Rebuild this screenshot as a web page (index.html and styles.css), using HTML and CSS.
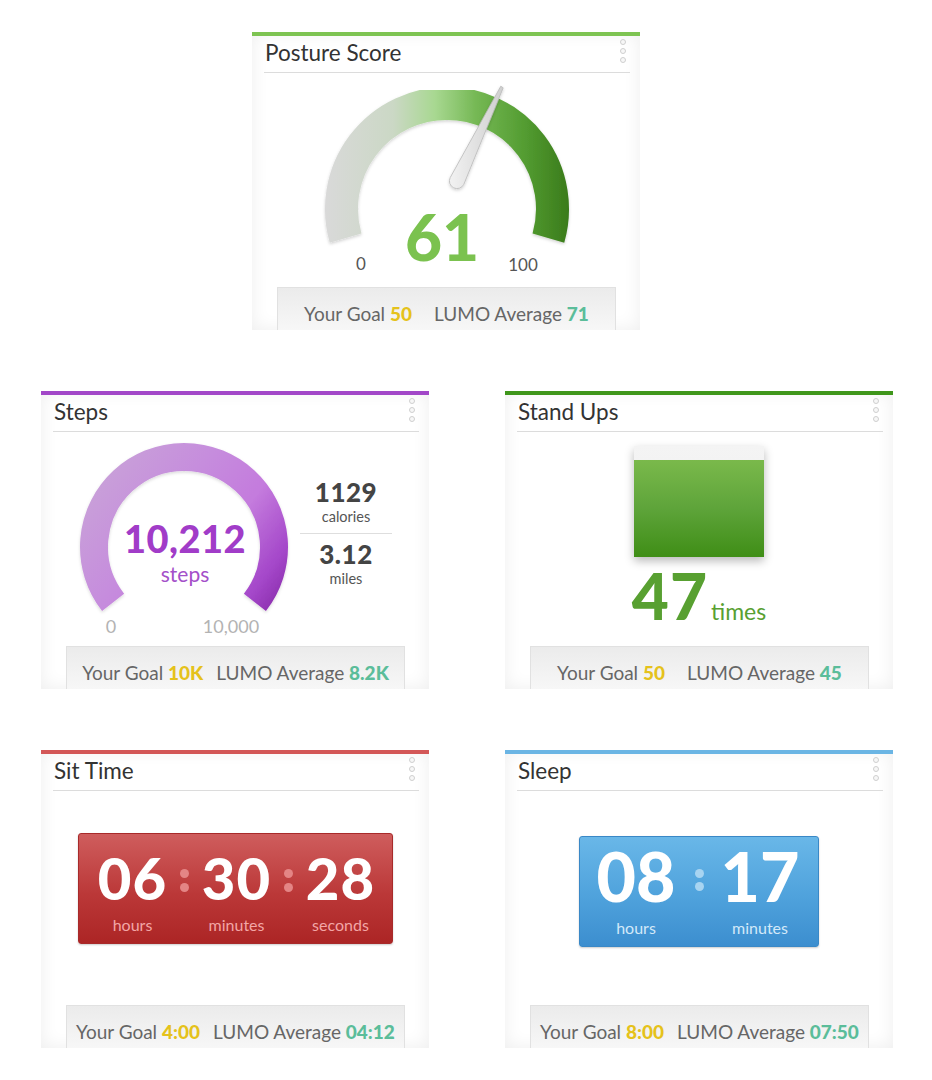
FILE: index.html
```html
<!DOCTYPE html>
<html lang="en">
<head>
<meta charset="utf-8">
<title>LUMO Dashboard</title>
<link rel="stylesheet" href="styles.css">
</head>
<body>
<div class="page">
  <div class="row row-top">
    <section class="card">
      <div class="card-bar bar-posture"></div>
      <header class="card-head">
        <h2 class="card-title">Posture Score</h2>
        <span class="menu"><i></i><i></i><i></i></span>
      </header>
      <div class="card-body">
        <svg class="gauge" width="388" height="214" viewBox="0 0 388 214">
          <defs>
            <linearGradient id="gPosture" gradientUnits="userSpaceOnUse" x1="73" y1="0" x2="317" y2="0">
              <stop offset="0" stop-color="#d9d9d9"/>
              <stop offset="0.28" stop-color="#cbd8c5"/>
              <stop offset="0.45" stop-color="#a8d891"/>
              <stop offset="0.62" stop-color="#75b854"/>
              <stop offset="0.82" stop-color="#539c31"/>
              <stop offset="1" stop-color="#3a7b1b"/>
            </linearGradient>
            <linearGradient id="gNeedle" x1="0" y1="0" x2="1" y2="0">
              <stop offset="0" stop-color="#f2f2f2"/>
              <stop offset="1" stop-color="#cfcfcf"/>
            </linearGradient>
            <filter id="soft" x="-10%" y="-10%" width="120%" height="130%">
              <feDropShadow dx="0" dy="1.5" stdDeviation="1.5" flood-color="#000" flood-opacity="0.18"/>
            </filter>
          </defs>
          <path d="M 93.6 165.1 A 105.5 105.5 0 1 1 296.4 165.1" fill="none" stroke="url(#gPosture)" stroke-width="33" filter="url(#soft)"/>
          <path d="M 198.2 104.6 L 248.8 13.2 L 251.2 14.8 L 211.8 111.4 A 7.2 7.2 0 0 1 198.2 104.6 Z" fill="url(#gNeedle)" stroke="#b9b9b9" stroke-width="0.8" filter="url(#soft)"/>
          <text class="g-big" x="190" y="188" fill="#7bc24f" font-size="64">61</text>
          <text class="g-tick" x="109" y="197" fill="#555">0</text>
          <text class="g-tick" x="271" y="198" fill="#555">100</text>
        </svg>
      </div>
      <footer class="card-foot foot-wide">
        <span>Your Goal <b class="goal">50</b></span>
        <span>LUMO Average <b class="avg">71</b></span>
      </footer>
    </section>
  </div>

  <div class="row">
    <section class="card">
      <div class="card-bar bar-steps"></div>
      <header class="card-head">
        <h2 class="card-title">Steps</h2>
        <span class="menu"><i></i><i></i><i></i></span>
      </header>
      <div class="card-body steps-body">
        <svg class="gauge" width="259" height="214" viewBox="0 0 259 214">
          <defs>
            <linearGradient id="gSteps" gradientUnits="userSpaceOnUse" x1="45" y1="40" x2="245" y2="190">
              <stop offset="0" stop-color="#c9a3d8"/>
              <stop offset="0.35" stop-color="#c68ddd"/>
              <stop offset="0.6" stop-color="#c47bdd"/>
              <stop offset="0.82" stop-color="#a548ca"/>
              <stop offset="1" stop-color="#7d209e"/>
            </linearGradient>
            <filter id="soft2" x="-10%" y="-10%" width="120%" height="130%">
              <feDropShadow dx="0" dy="1.5" stdDeviation="1.5" flood-color="#000" flood-opacity="0.15"/>
            </filter>
          </defs>
          <path d="M 72.1 170.4 A 90 90 0 1 1 213.9 170.4" fill="none" stroke="url(#gSteps)" stroke-width="28" filter="url(#soft2)"/>
          <text class="g-big" x="144" y="121" fill="#a13cc8" font-size="38" letter-spacing="0.5">10,212</text>
          <text class="g-unit" x="144" y="150" fill="#a450c9">steps</text>
          <text class="g-tick g-tick-lg" x="70" y="201" fill="#b3b3b3">0</text>
          <text class="g-tick g-tick-lg" x="190" y="201" fill="#b3b3b3">10,000</text>
        </svg>
        <div class="stats">
          <div class="stat">
            <span class="stat-num">1129</span>
            <span class="stat-lbl">calories</span>
          </div>
          <div class="stat stat-2">
            <span class="stat-num">3.12</span>
            <span class="stat-lbl">miles</span>
          </div>
        </div>
      </div>
      <footer class="card-foot">
        <span>Your Goal <b class="goal">10K</b></span>
        <span>LUMO Average <b class="avg">8.2K</b></span>
      </footer>
    </section>

    <section class="card">
      <div class="card-bar bar-stand"></div>
      <header class="card-head">
        <h2 class="card-title">Stand Ups</h2>
        <span class="menu"><i></i><i></i><i></i></span>
      </header>
      <div class="card-body stand-body">
        <div class="stand-bar"><div class="stand-fill"></div></div>
        <div class="stand-count">
          <span class="stand-num">47</span>
          <span class="stand-unit">times</span>
        </div>
      </div>
      <footer class="card-foot foot-wide">
        <span>Your Goal <b class="goal">50</b></span>
        <span>LUMO Average <b class="avg">45</b></span>
      </footer>
    </section>
  </div>

  <div class="row">
    <section class="card">
      <div class="card-bar bar-sit"></div>
      <header class="card-head">
        <h2 class="card-title">Sit Time</h2>
        <span class="menu"><i></i><i></i><i></i></span>
      </header>
      <div class="card-body timer-body">
        <div class="timer timer-sit">
          <div class="unit u-sit"><span class="num">06</span><span class="lbl">hours</span></div>
          <div class="colon c-sit"><i></i><i></i></div>
          <div class="unit u-sit"><span class="num">30</span><span class="lbl">minutes</span></div>
          <div class="colon c-sit"><i></i><i></i></div>
          <div class="unit u-sit"><span class="num">28</span><span class="lbl">seconds</span></div>
        </div>
      </div>
      <footer class="card-foot">
        <span>Your Goal <b class="goal">4:00</b></span>
        <span>LUMO Average <b class="avg">04:12</b></span>
      </footer>
    </section>

    <section class="card">
      <div class="card-bar bar-sleep"></div>
      <header class="card-head">
        <h2 class="card-title">Sleep</h2>
        <span class="menu"><i></i><i></i><i></i></span>
      </header>
      <div class="card-body timer-body">
        <div class="timer timer-sleep">
          <div class="unit u-sleep u-sleep-1"><span class="num">08</span><span class="lbl">hours</span></div>
          <div class="colon c-sleep"><i></i><i></i></div>
          <div class="unit u-sleep u-sleep-2"><span class="num">17</span><span class="lbl">minutes</span></div>
        </div>
      </div>
      <footer class="card-foot">
        <span>Your Goal <b class="goal">8:00</b></span>
        <span>LUMO Average <b class="avg">07:50</b></span>
      </footer>
    </section>
  </div>
</div>
</body>
</html>
```

FILE: styles.css
```css
html, body {
  margin: 0;
  background: #ffffff;
}

body {
  font-family: Lato, "Open Sans", "Liberation Sans", sans-serif;
  color: #333;
}

.page {
  display: flex;
  flex-direction: column;
  gap: 61px;
  padding: 32px 0 0 41px;
}

.row {
  display: flex;
  gap: 76px;
}

.row-top {
  padding-left: 211px;
}

/* ---------- card ---------- */
.card {
  width: 388px;
  height: 298px;
  display: flex;
  flex-direction: column;
  background: #ffffff;
  box-shadow: inset 0 0 18px rgba(0, 0, 0, 0.07);
}

.card-bar {
  height: 4px;
  flex: none;
}
.bar-posture { background: #7ec452; }
.bar-steps   { background: #a247c8; }
.bar-stand   { background: #3f961b; }
.bar-sit     { background: #d35757; }
.bar-sleep   { background: #6bb5e4; }

.card-head {
  flex: none;
  height: 36px;
  margin: 0 10px 0 12px;
  display: flex;
  justify-content: space-between;
  align-items: flex-start;
  border-bottom: 1px solid #dcdcdc;
}

.card-title {
  margin: 0;
  padding: 4px 0 0 1px;
  font-size: 22.5px;
  line-height: 26px;
  font-weight: 400;
  color: #333;
}

.menu {
  display: flex;
  flex-direction: column;
  gap: 3px;
  padding-top: 3px;
  margin-right: 4px;
}
.menu i {
  display: block;
  width: 6px;
  height: 6px;
  box-sizing: border-box;
  border-radius: 50%;
  border: 1px solid #cfcfcf;
  background: #f7f7f7;
}

.card-body {
  flex: 1;
  display: flex;
}

.gauge {
  display: block;
  flex: none;
}

.g-big {
  font-family: Lato, "Open Sans", sans-serif;
  font-weight: 900;
  text-anchor: middle;
}
.g-unit {
  font-family: Lato, "Open Sans", sans-serif;
  font-size: 21px;
  text-anchor: middle;
}
.g-tick {
  font-family: Lato, "Open Sans", sans-serif;
  font-size: 17px;
  text-anchor: middle;
}
.g-tick-lg {
  font-size: 18px;
}

/* ---------- footer ---------- */
.card-foot {
  flex: none;
  height: 43px;
  box-sizing: border-box;
  margin: 0 24px 0 25px;
  padding-top: 14px;
  display: flex;
  justify-content: center;
  align-items: flex-start;
  gap: 13px;
  background: linear-gradient(#ebebeb, #f7f7f7);
  border: 1px solid #e1e1e1;
  border-bottom: 0;
  font-size: 19px;
  line-height: 23px;
  color: #666;
  white-space: nowrap;
}
.foot-wide {
  gap: 22px;
}
.card-foot b {
  font-weight: 900;
}
.goal { color: #e5c21b; }
.avg  { color: #5bbd9a; }

/* ---------- steps ---------- */
.stats {
  width: 92px;
  padding-top: 46px;
  display: flex;
  flex-direction: column;
  align-items: stretch;
  text-align: center;
}
.stat {
  display: flex;
  flex-direction: column;
  padding-bottom: 8px;
  border-bottom: 1px solid #dedede;
}
.stat-2 {
  border-bottom: 0;
  padding-top: 6px;
}
.stat-num {
  font-size: 26px;
  line-height: 28px;
  font-weight: 900;
  letter-spacing: 0.5px;
  color: #444;
}
.stat-lbl {
  margin-top: 3px;
  font-size: 14.5px;
  line-height: 16px;
  color: #555;
}

/* ---------- stand ups ---------- */
.stand-body {
  flex-direction: column;
  align-items: center;
}
.stand-bar {
  margin-top: 14px;
  width: 130px;
  height: 111px;
  display: flex;
  flex-direction: column;
  justify-content: flex-end;
  background: linear-gradient(#f4f4f4, #ececec);
  box-shadow: 0 4px 9px rgba(0, 0, 0, 0.28);
}
.stand-fill {
  height: 97px;
  background: linear-gradient(#7ab94b, #5ea43a 50%, #3f8e16);
}
.stand-count {
  margin-top: 7px;
  display: flex;
  align-items: baseline;
  gap: 3px;
  color: #58a031;
}
.stand-num {
  font-size: 64px;
  line-height: 64px;
  font-weight: 900;
  letter-spacing: 1px;
}
.stand-unit {
  font-size: 23px;
  line-height: 26px;
}

/* ---------- timers ---------- */
.timer-body {
  justify-content: center;
  align-items: flex-start;
}
.timer {
  display: flex;
  box-sizing: border-box;
  height: 111px;
  border-radius: 3px;
  color: #fff;
}
.timer-sit {
  margin-top: 42px;
  width: 315px;
  padding: 15px 0 0 15px;
  background: linear-gradient(#cf5d5d, #bb3838 55%, #ac2525);
  border: 1px solid #a82a2a;
  box-shadow: 0 1px 2px rgba(0, 0, 0, 0.2);
}
.timer-sleep {
  margin-top: 45px;
  width: 240px;
  padding: 5px 0 0 16px;
  background: linear-gradient(#69b7e8, #4fa2dc 55%, #3c8ecf);
  border: 1px solid #3a88c6;
  box-shadow: 0 1px 2px rgba(0, 0, 0, 0.2);
}

.unit {
  display: flex;
  flex-direction: column;
  align-items: center;
}
.num {
  font-weight: 900;
  color: #fff;
}
.lbl {
  font-size: 16px;
  line-height: 18px;
}

.u-sit { width: 78px; }
.u-sit .num {
  font-size: 58px;
  line-height: 58px;
  letter-spacing: 1px;
}
.u-sit .lbl {
  margin-top: 9px;
  color: #f3a6a6;
}

.u-sleep-1 { width: 80px; }
.u-sleep-2 { width: 76px; }
.u-sleep .num {
  font-size: 68px;
  line-height: 68px;
}
.u-sleep .lbl {
  margin-top: 9px;
  color: #d3e9f9;
}

.colon {
  display: flex;
  flex-direction: column;
  justify-content: center;
  align-items: center;
  gap: 5px;
  padding-top: 2px;
}
.colon i {
  display: block;
  width: 9px;
  height: 9px;
  border-radius: 50%;
}
.c-sit {
  width: 26px;
  height: 58px;
}
.c-sit i { background: #e48585; }
.c-sleep {
  width: 46px;
  height: 68px;
  gap: 4px;
  padding-top: 4px;
}
.c-sleep i { background: #a8d4f1; }
```
